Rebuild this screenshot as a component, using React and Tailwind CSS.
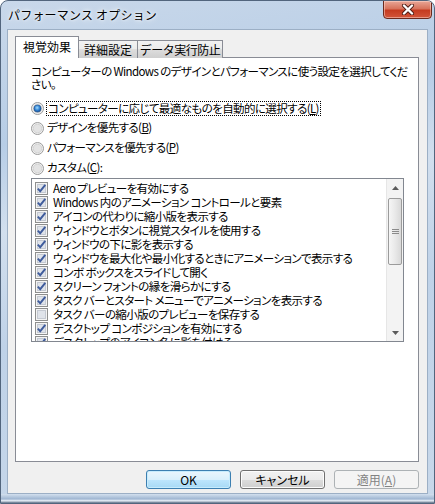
import React from "react";

const effects = [
  ["Aero プレビューを有効にする", true],
  ["Windows 内のアニメーション コントロールと要素", true],
  ["アイコンの代わりに縮小版を表示する", true],
  ["ウィンドウとボタンに視覚スタイルを使用する", true],
  ["ウィンドウの下に影を表示する", true],
  ["ウィンドウを最大化や最小化するときにアニメーションで表示する", true],
  ["コンボ ボックスをスライドして開く", true],
  ["スクリーン フォントの縁を滑らかにする", true],
  ["タスク バーとスタート メニューでアニメーションを表示する", true],
  ["タスク バーの縮小版のプレビューを保存する", false],
  ["デスクトップ コンポジションを有効にする", true],
  ["デスクトップのアイコン名に影を付ける", true],
];

function CheckBox({ checked }) {
  return (
    <svg width="13" height="13" viewBox="0 0 13 13" className="shrink-0">
      <rect x="0.5" y="0.5" width="12" height="12" fill="#f4f4f4" stroke="#8e8f8f" />
      <rect x="2.5" y="2.5" width="8" height="8" fill="#dfe3ea" stroke="#c4c9d2" />
      {checked && (
        <path d="M2.8 6.6 L5.2 9.2 L10.3 2.9" fill="none" stroke="#3f5c9c" strokeWidth="1.9" />
      )}
    </svg>
  );
}

function Radio({ selected }) {
  return (
    <svg width="13" height="13" viewBox="0 0 13 13" className="shrink-0">
      <defs>
        <radialGradient id="radioDot" cx="45%" cy="40%" r="60%">
          <stop offset="0" stopColor="#9fdcff" />
          <stop offset="0.6" stopColor="#2f7fd0" />
          <stop offset="1" stopColor="#174d92" />
        </radialGradient>
      </defs>
      <circle cx="6.5" cy="6.5" r="6" fill="#f2f2f2" stroke="#9a9a9a" />
      <circle cx="6.5" cy="6.5" r="4.3" fill="#e3e3e3" stroke="#d2d2d2" />
      {selected && <circle cx="6.5" cy="6.5" r="3.6" fill="url(#radioDot)" stroke="#1c4f8a" strokeWidth="0.6" />}
    </svg>
  );
}

function Arrow({ up }) {
  return (
    <svg width="7" height="4" viewBox="0 0 7 4">
      <path d={up ? "M0 4 L3.5 0 L7 4 Z" : "M0 0 L3.5 4 L7 0 Z"} fill="#5b5b5b" />
    </svg>
  );
}

export default function App() {
  return (
    <div className="w-[435px] h-[504px] flex flex-col overflow-hidden rounded-t-[8px] border border-[#52657d] bg-[linear-gradient(170deg,#c9d8ea_0%,#b7cde6_25%,#d2dfee_40%,#bfd2e8_60%,#c8d8ea_100%)] font-['Noto_Sans_CJK_JP',sans-serif] text-[11.5px] tracking-[-0.6px] text-black [font-feature-settings:'palt']">
      {/* title bar */}
      <div className="h-[28px] flex items-start shrink-0">
        <div className="pl-[7px] pt-[5px] text-[12px] leading-[17px] tracking-[0.2px] [font-feature-settings:normal] [text-shadow:0_0_6px_#fff,0_0_3px_#fff]">
          パフォーマンス オプション
        </div>
        <div className="ml-auto mr-[2px] -mt-px w-[49px] h-[19px] flex items-center justify-center rounded-b-[4px] border border-[#6b2a1e] bg-[linear-gradient(#e9a797,#d7735c_45%,#c53b20_55%,#d2553a)] shadow-[inset_0_0_0_1px_rgba(255,220,210,0.5)]">
          <svg width="14" height="11" viewBox="0 0 14 11">
            <path d="M3 1.5 L11 9.5 M11 1.5 L3 9.5" stroke="#4a1a12" strokeWidth="4" strokeLinecap="round" />
            <path d="M3 1.5 L11 9.5 M11 1.5 L3 9.5" stroke="#ffffff" strokeWidth="2.4" strokeLinecap="round" />
          </svg>
        </div>
      </div>

      {/* client area */}
      <div className="mx-[6px] h-[465px] shrink-0 flex flex-col border border-[#9cafc5] bg-[#f0f0f0] px-[7px] pt-[6px]">
        <div className="flex items-end h-[22px] -mb-px relative z-10 text-[12px] tracking-normal [font-feature-settings:normal]">
          <div className="w-[64px] h-[22px] flex items-center justify-center border border-b-0 border-[#898c95] bg-white pb-[2px]">
            視覚効果
          </div>
          <div className="w-[59px] h-[18px] flex items-center justify-center border border-l-0 border-b-0 border-[#898c95] bg-[linear-gradient(#f2f2f2,#ebebeb_50%,#dddddd_50%,#cfcfcf)]">
            詳細設定
          </div>
          <div className="w-[85px] h-[18px] flex items-center justify-center border border-l-0 border-b-0 border-[#898c95] bg-[linear-gradient(#f2f2f2,#ebebeb_50%,#dddddd_50%,#cfcfcf)] tracking-[-0.5px]">
            データ実行防止
          </div>
        </div>

        <div className="w-[404px] h-[405px] border border-[#898c95] bg-white pl-[15px] pt-[7px]">
          <p className="leading-[13px] whitespace-nowrap">
            コンピューターの Windows のデザインとパフォーマンスに使う設定を選択してくだ
            <br />
            さい。
          </p>

          <div className="mt-[7px] flex flex-col">
            <div className="h-[20px] flex items-center gap-[2px]">
              <Radio selected />
              <span className="border border-dotted border-black px-[1px] leading-[13px]">
                コンピューターに応じて最適なものを自動的に選択する(<span className="underline">L</span>)
              </span>
            </div>
            <div className="h-[20px] flex items-center gap-[3px]">
              <Radio />
              <span>
                デザインを優先する(<span className="underline">B</span>)
              </span>
            </div>
            <div className="h-[20px] flex items-center gap-[3px]">
              <Radio />
              <span>
                パフォーマンスを優先する(<span className="underline">P</span>)
              </span>
            </div>
            <div className="h-[20px] flex items-center gap-[3px]">
              <Radio />
              <span>
                カスタム(<span className="underline">C</span>):
              </span>
            </div>
          </div>

          <div className="w-[373px] h-[164px] border border-[#828790] flex overflow-hidden">
            <div className="flex-1 pl-[3px] pt-[2px] overflow-hidden">
              {effects.map(([label, on]) => (
                <div key={label} className="h-[14px] flex items-center gap-[5px] whitespace-nowrap leading-[14px]">
                  <CheckBox checked={on} />
                  <span>{label}</span>
                </div>
              ))}
            </div>
            <div className="w-[17px] flex flex-col bg-[#f3f3f3] border-l border-[#e6e6e6]">
              <div className="h-[17px] flex items-center justify-center">
                <Arrow up />
              </div>
              <div className="mx-[1px] mt-[2px] h-[67px] rounded-[2px] border border-[#9b9b9b] bg-[linear-gradient(90deg,#f6f6f6,#e9e9e9_50%,#d9d9d9)] flex flex-col items-center justify-center gap-[1px]">
                <span className="w-[7px] h-px bg-[#8a8a8a]" />
                <span className="w-[7px] h-px bg-[#8a8a8a]" />
                <span className="w-[7px] h-px bg-[#8a8a8a]" />
              </div>
              <div className="flex-1" />
              <div className="h-[17px] flex items-center justify-center">
                <Arrow />
              </div>
            </div>
          </div>
        </div>

        <div className="flex justify-end gap-[9px] pr-px mt-[8px] text-[12px] tracking-normal">
          <button className="w-[85px] h-[19px] rounded-[3px] border border-[#3c7fb1] bg-[linear-gradient(#eaf6fd,#d9f0fc_50%,#bee6fd_50%,#a7d9f5)] leading-none shadow-[inset_0_0_0_1px_#c7ecfd]">
            OK
          </button>
          <button className="w-[85px] h-[19px] rounded-[3px] border border-[#707070] bg-[linear-gradient(#f2f2f2,#ebebeb_50%,#dddddd_50%,#cfcfcf)] leading-none shadow-[inset_0_0_0_1px_#fcfcfc]">
            キャンセル
          </button>
          <button className="w-[85px] h-[19px] rounded-[3px] border border-[#adb2b5] bg-[#f4f4f4] text-[#838383] leading-none">
            適用(<span className="underline">A</span>)
          </button>
        </div>
      </div>

      {/* bottom frame */}
      <div className="flex-1 bg-[linear-gradient(#d3e0ee,#9fb6d2_55%,#e8eef6_75%,#5a6d84)]" />
    </div>
  );
}
